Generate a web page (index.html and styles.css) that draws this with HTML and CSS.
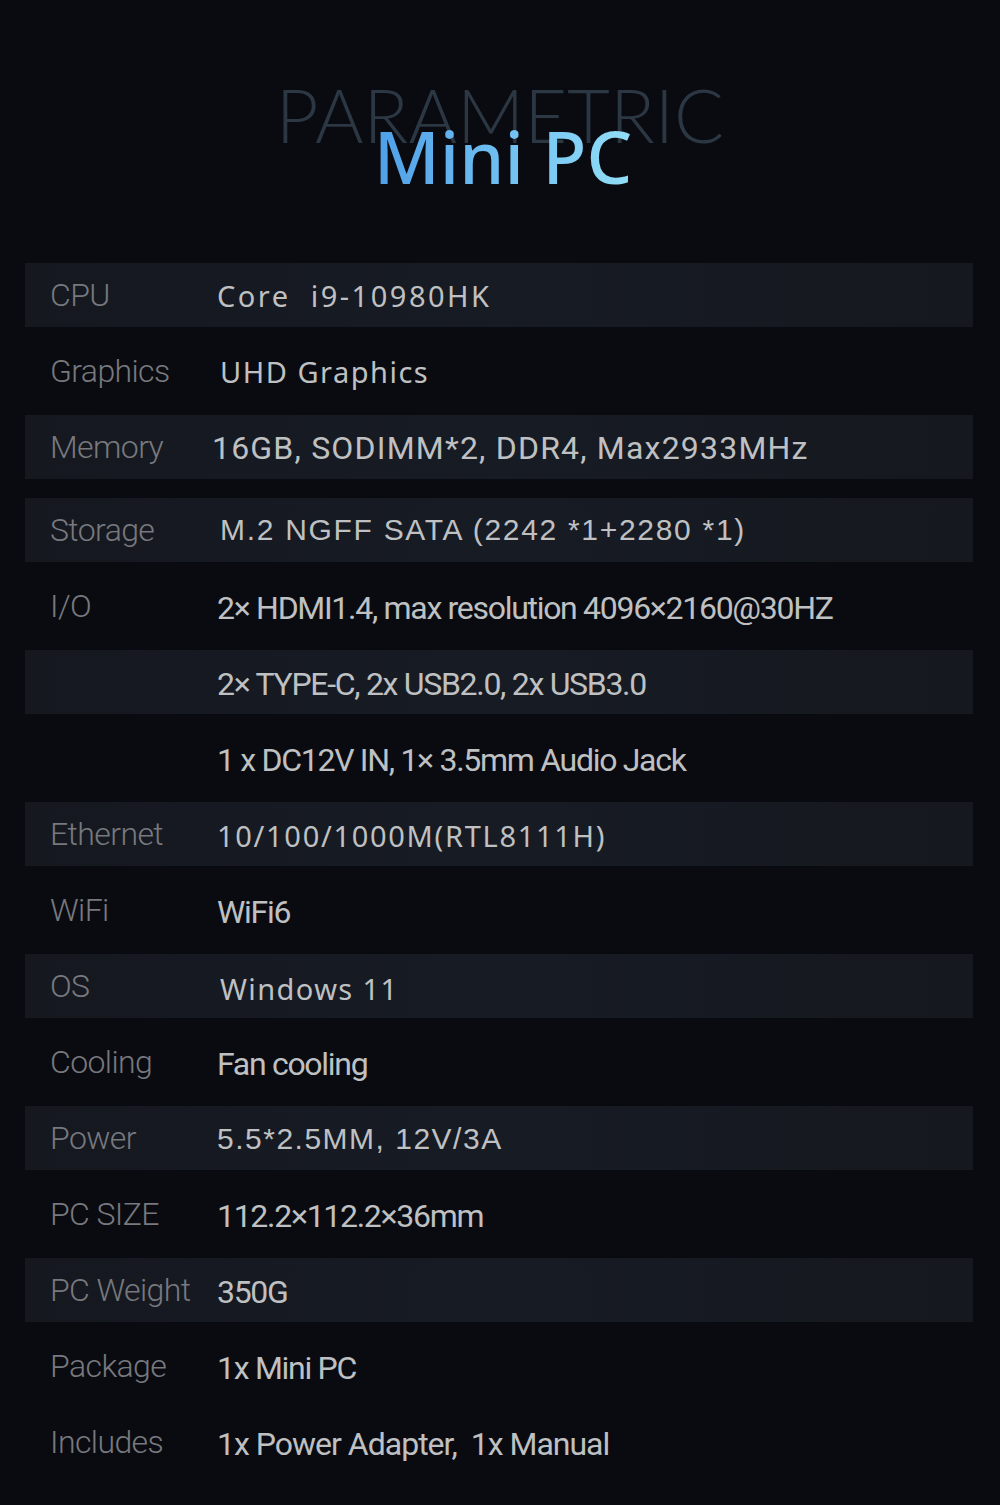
FILE: index.html
```html
<!DOCTYPE html>
<html lang="en">
<head>
<meta charset="utf-8">
<title>Parametric Mini PC</title>
<link rel="stylesheet" href="styles.css">
</head>
<body>
<div class="page">
  <header class="heading">
    <div class="bg-word">PARAMETRIC</div>
    <div class="title">Mini PC</div>
  </header>
  <div class="specs">
    <div class="row stripe"><span class="label">CPU</span><span class="val v-wide v-cpu">Core&nbsp; i9-10980HK</span></div>
    <div class="row"><span class="label">Graphics</span><span class="val v-wide v-gfx">UHD Graphics</span></div>
    <div class="row stripe"><span class="label">Memory</span><span class="val v-mem">16GB, SODIMM*2, DDR4, Max2933MHz</span></div>
    <div class="row stripe r-storage"><span class="label">Storage</span><span class="val v-arial v-sto">M.2 NGFF SATA (2242 *1+2280 *1)</span></div>
    <div class="row"><span class="label">I/O</span><span class="val v-cond">2× HDMI1.4, max resolution 4096×2160@30HZ</span></div>
    <div class="row stripe"><span class="label"></span><span class="val v-cond">2× TYPE-C, 2x USB2.0, 2x USB3.0</span></div>
    <div class="row"><span class="label"></span><span class="val v-cond">1 x DC12V IN, 1× 3.5mm Audio Jack</span></div>
    <div class="row stripe"><span class="label">Ethernet</span><span class="val v-wide v-eth">10/100/1000M(RTL8111H)</span></div>
    <div class="row"><span class="label">WiFi</span><span class="val v-cond">WiFi6</span></div>
    <div class="row stripe"><span class="label">OS</span><span class="val v-wide v-os">Windows 11</span></div>
    <div class="row"><span class="label">Cooling</span><span class="val v-cond">Fan cooling</span></div>
    <div class="row stripe"><span class="label">Power</span><span class="val v-arial v-pow">5.5*2.5MM, 12V/3A</span></div>
    <div class="row"><span class="label">PC SIZE</span><span class="val v-cond">112.2×112.2×36mm</span></div>
    <div class="row stripe"><span class="label">PC Weight</span><span class="val v-cond">350G</span></div>
    <div class="row"><span class="label">Package</span><span class="val v-cond">1x Mini PC</span></div>
    <div class="row"><span class="label">Includes</span><span class="val v-cond v-inc">1x Power Adapter,&nbsp; 1x Manual</span></div>
  </div>
</div>
</body>
</html>
```
FILE: styles.css
```css
html, body {
  margin: 0;
  padding: 0;
  background: #0a0b10;
}
body {
  font-family: "Roboto", "Noto Sans", sans-serif;
}
.page {
  width: 1000px;
  height: 1505px;
  overflow: hidden;
  background: #0a0b10;
}
.heading {
  height: 263px;
  display: grid;
  justify-items: center;
}
.bg-word {
  grid-area: 1 / 1;
  margin-top: 67px;
  font-family: "Lato", sans-serif;
  font-weight: 300;
  font-size: 74px;
  line-height: 96px;
  letter-spacing: 0;
  color: #2c3744;
}
.title {
  grid-area: 1 / 1;
  margin-top: 108px;
  margin-left: 6px;
  font-family: "Noto Sans", sans-serif;
  font-weight: 500;
  font-size: 72px;
  line-height: 96px;
  background: linear-gradient(90deg, #4f9fe8 0%, #70c0f2 50%, #92def7 100%);
  -webkit-background-clip: text;
  background-clip: text;
  color: transparent;
}
.specs {
  margin: 0 27px 0 25px;
  display: flex;
  flex-direction: column;
  gap: 12px;
}
.row {
  height: 64px;
  display: flex;
  align-items: center;
  padding-left: 25px;
}
.r-storage {
  margin-top: 7px;
}
.stripe {
  background: linear-gradient(90deg, #15181f 0%, #171b24 50%, #15181e 100%);
}
.label {
  width: 167px;
  flex: none;
  font-family: "Roboto", sans-serif;
  font-weight: 300;
  font-size: 32px;
  letter-spacing: -0.6px;
  color: #77797e;
}
.val {
  color: #bfc0c2;
  font-size: 29px;
}
.v-wide {
  font-family: "Noto Sans", sans-serif;
  letter-spacing: 2px;
}
.v-cpu { letter-spacing: 2.5px; }
.v-gfx { margin-left: 3px; letter-spacing: 1.5px; }
.v-eth { letter-spacing: 1.7px; margin-top: 2px; }
.v-os { margin-left: 3px; margin-top: 4px; letter-spacing: 1.4px; }
.v-arial {
  font-family: "Liberation Sans", sans-serif;
  font-size: 30px;
}
.v-sto { margin-left: 3px; letter-spacing: 1.7px; }
.v-pow { letter-spacing: 1.5px; margin-top: 2px; }
.v-mem {
  font-family: "Roboto", sans-serif;
  font-size: 32px;
  letter-spacing: 1.2px;
  margin-left: -5px;
  margin-top: 2px;
}
.v-cond {
  font-family: "Roboto", sans-serif;
  font-weight: 400;
  font-size: 32px;
  letter-spacing: -1.3px;
  margin-top: 4px;
}
.v-inc { letter-spacing: -1px; }
```
